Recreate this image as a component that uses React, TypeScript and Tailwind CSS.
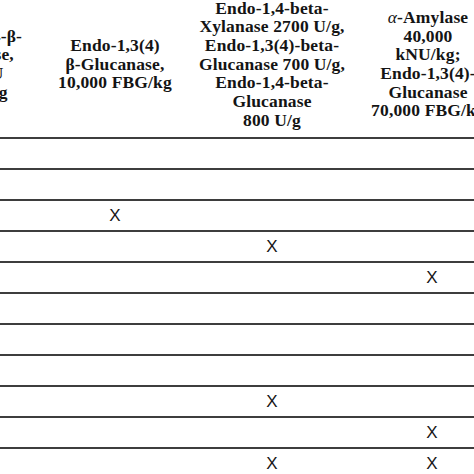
import React from 'react';

const cols = ['w-[120px]', 'w-[156px]', 'w-[158px]', 'w-[162px]'];

// which enzyme column gets an X, per row (cols 0..3)
const rows: number[][] = [[], [], [1], [2], [3], [], [], [], [2], [3], [2, 3]];

function HeaderCell({ lines, width, pad = '' }: { lines: React.ReactNode[]; width: string; pad?: string }) {
  return (
    <div className={`${width} ${pad} shrink-0 flex items-center justify-center pb-[9px]`}>
      <div className="text-center whitespace-nowrap font-bold text-[17.5px] leading-[18.7px] tracking-[0.15px] text-[#141414] font-['Liberation_Serif',serif]">
        {lines.map((l, i) => (
          <div key={i}>{l}</div>
        ))}
      </div>
    </div>
  );
}

export default function App() {
  return (
    <div className="w-[474px] h-[474px] overflow-hidden bg-white">
      <div className="ml-[-83px] w-[596px]">
        <div className="flex h-[139px] border-b-2 border-[#3d3d3d]">
          <HeaderCell width={cols[0]} lines={['Endo-1,4-β-', 'Xylanase,', '2800 U', 'TXU/kg']} />
          <HeaderCell width={cols[1]} lines={['Endo-1,3(4)', 'β-Glucanase,', '10,000 FBG/kg']} />
          <HeaderCell
            width={cols[2]}
            lines={[
              'Endo-1,4-beta-',
              'Xylanase 2700 U/g,',
              'Endo-1,3(4)-beta-',
              'Glucanase 700 U/g,',
              'Endo-1,4-beta-',
              'Glucanase',
              '800 U/g',
            ]}
          />
          <HeaderCell
            width={cols[3]}
            pad="pr-[8px]"
            lines={[
              <span key="a">
                <i className="font-normal">α</i>-Amylase
              </span>,
              '40,000',
              'kNU/kg;',
              'Endo-1,3(4)-',
              'Glucanase',
              '70,000 FBG/kg',
            ]}
          />
        </div>
        {rows.map((marks, r) => (
          <div key={r} className="flex h-[31px] border-b-2 border-[#3d3d3d]">
            {cols.map((w, c) => (
              <div
                key={c}
                className={`${w} shrink-0 flex items-center justify-center text-[17px] text-[#161616] font-['Liberation_Sans',sans-serif]`}
              >
                {marks.includes(c) ? 'X' : ''}
              </div>
            ))}
          </div>
        ))}
      </div>
    </div>
  );
}
